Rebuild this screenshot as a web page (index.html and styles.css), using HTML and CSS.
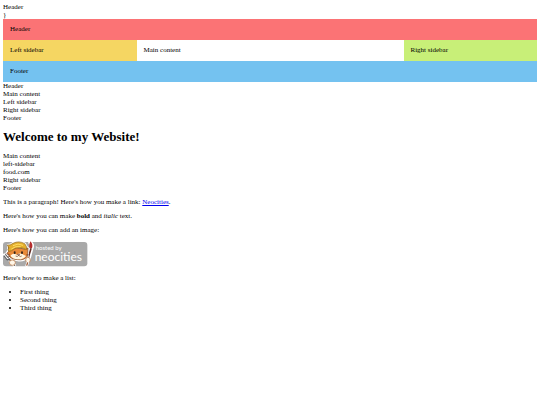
FILE: index.html
```html
<!DOCTYPE html>
<html lang="en">
<head>
    <meta charset="UTF-8">
    <meta name="viewport" content="width=device-width, initial-scale=1.0">
    <title>The web site of food</title>
    <link rel="stylesheet" href="styles.css">
</head>
<body>

    <div>Header</div>
    }

    <div class="wrapper">
        <header class="header">Header</header>
        <aside class="left-sidebar">Left sidebar</aside>
        <main class="main-content">Main content</main>
        <aside class="right-sidebar">Right sidebar</aside>
        <footer class="footer">Footer</footer>
    </div>

    <div>Header</div>
    <div>Main content</div>
    <div>Left sidebar</div>
    <div>Right sidebar</div>
    <div>Footer</div>

    <h1>Welcome to my Website!</h1>

    <div>Main content</div>
    <div>left-sidebar</div>
    <div>food.com</div>
    <div>Right sidebar</div>
    <div>Footer</div>

    <p>This is a paragraph! Here's how you make a link: <a href="https://neocities.org">Neocities</a>.</p>

    <p>Here's how you can make <strong>bold</strong> and <em>italic</em> text.</p>

    <p>Here's how you can add an image:</p>

    <svg class="site-button" viewBox="0 0 255 78" role="img" aria-label="hosted by neocities">
        <rect x="0" y="3" width="253" height="73" rx="9" fill="#a9a9a9"/>
        <!-- fork -->
        <g fill="none" stroke-linecap="round">
            <path d="M4 42l9 10M13 37l9 11M17 53l17 20" stroke="#fff" stroke-width="10"/>
            <path d="M3 45l8 10q6 3 10-1 3-5-1-9l-7-8M8 41l8 9M18 54l17 19" stroke="#666" stroke-width="4"/>
        </g>
        <!-- brush -->
        <path d="M82 5q8 8 3 18l-8 30" fill="none" stroke="#fff" stroke-width="12" stroke-linecap="round"/>
        <path d="M84 22l-9 31" stroke="#642c25" stroke-width="5"/>
        <path d="M82 1q9 9 5 21l-8-2q-2-10 3-19z" fill="#b52c2d"/>
        <!-- cat -->
        <path d="M15 12Q24 12 30 6 50-2 66 8l6 11 4 3-2 24Q64 61 44 58 24 56 16 43L11 37 16 28z" fill="#fff" stroke="#fff" stroke-width="6" stroke-linejoin="round"/>
        <path d="M16 16l14 2 34 6 11-3-1 24Q64 59 44 56 22 55 16 41l-4-4 5-6z" fill="#e98a38" stroke="#70402a" stroke-width="2"/>
        <path d="M22 44q9-10 19-3 11-7 22 1l6 3Q61 56 44 55 28 53 22 44z" fill="#fff5df"/>
        <path d="M13 12q9 2 17-5Q48-2 65 8q7 7 6 18Q50 15 33 24q-7 7-16 7-4-6 1-10z" fill="#e4b02d" stroke="#8c6520" stroke-width="2"/>
        <path d="M30 14q15-9 30-1M25 24q12-10 28-7" fill="none" stroke="#ffdc65" stroke-width="3"/>
        <ellipse cx="35" cy="35" rx="3" ry="4" fill="#382719"/>
        <ellipse cx="57" cy="35" rx="3" ry="4" fill="#382719"/>
        <path d="M43 40h7l-3 4zM47 43q-4 6-9 2M47 43q5 6 9 2M20 40l-9-1M22 45l-8 3M69 42l8-1" fill="none" stroke="#6b3928" stroke-width="2"/>
        <!-- paws -->
        <ellipse cx="28" cy="65" rx="9" ry="8" fill="#fff7e9" stroke="#ba7544" stroke-width="2"/>
        <ellipse cx="75" cy="57" rx="7" ry="8" fill="#fff7e9" stroke="#ba7544" stroke-width="2"/>
        <path d="M74 65l-3 9" stroke="#fff" stroke-width="8" stroke-linecap="round"/>
        <path d="M74 64l-3 10" stroke="#9b5836" stroke-width="4"/>
        <text class="button-small" x="98" y="28">hosted by</text>
        <text class="button-name" x="95" y="60">neocities</text>
    </svg>

    <p>Here's how to make a list:</p>

    <ul>
        <li>First thing</li>
        <li>Second thing</li>
        <li>Third thing</li>
    </ul>

</body>
</html>
```
FILE: styles.css
```css
body {
    margin: 3px;
    background: #fff;
    color: #000;
    font-family: "Liberation Serif", "Times New Roman", serif;
    font-size: 7px;
    line-height: 8px;
}

.wrapper {
    display: grid;
    grid-template-columns: 1fr 2fr 1fr;
    line-height: 7px;
}

.wrapper > * {
    padding: 7px;
}

.header {
    grid-column: 1 / -1;
    background: #fb7375;
}

.left-sidebar {
    background: #f5d662;
}

.main-content {
    background: #fff;
}

.right-sidebar {
    background: #c8ef78;
}

.footer {
    grid-column: 1 / -1;
    background: #74c2f0;
}

h1 {
    margin: 7px 0 8px;
    font-size: 13px;
    line-height: 15px;
}

p {
    margin: 6px 0;
}

a {
    color: #0000ee;
}

.site-button {
    display: block;
    width: 85px;
    height: 26px;
    margin: 7px 0;
}

.button-small,
.button-name {
    fill: #fff;
    font-family: Lato, "Open Sans", sans-serif;
}

.button-small {
    font-size: 18px;
}

.button-name {
    font-size: 36px;
}

ul {
    margin: 6px 0;
    padding-left: 17px;
}
```
